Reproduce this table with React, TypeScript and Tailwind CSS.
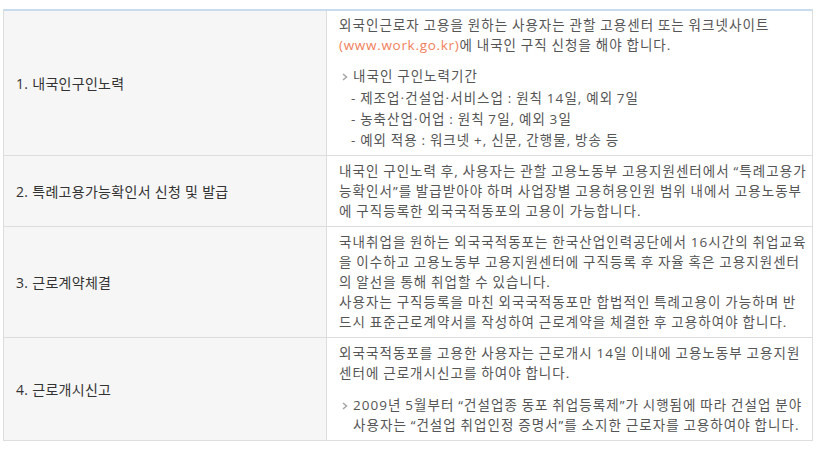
const Bullet = () => (
    <svg width="6" height="8" viewBox="0 0 6 8" className="absolute left-[3px] top-[7px]">
        <path d="M1 1 L4.5 4 L1 7" fill="none" stroke="#a8a8a8" strokeWidth="1.6" />
    </svg>
)

const Line = ({ children }: { children: React.ReactNode }) => (
    <span className="block whitespace-nowrap">{children}</span>
)

interface RowProps {
    label: string;
    last?: boolean;
    cellClass: string;
    children: React.ReactNode;
}

const Row = ({ label, last, cellClass, children }: RowProps) => (
    <div className={`grid grid-cols-[323px_1fr] ${last ? '' : 'border-b border-[#dddddd]'}`}>
        <div className="flex items-center bg-[#f6f6f6] border-r border-[#dddddd] pl-3 text-[14px] tracking-[0.3px] text-[#333333]">
            {label}
        </div>
        <div className={`pl-3 text-[13.5px] leading-[20px] tracking-[1.05px] [word-spacing:-0.8px] text-[#555555] ${cellClass}`}>
            {children}
        </div>
    </div>
)

export default function App() {
    return (
        <div className="min-h-[454px] bg-white pt-[9px] pl-[3px]" style={{ fontFamily: '"Open Sans", "Noto Sans CJK KR", sans-serif' }}>
            <div className="w-[810px] border-t-2 border-t-[#c9dcee] border-x border-b border-[#dddddd]">
                <Row label="1. 내국인구인노력" cellClass="pt-[4px] pb-[4px]">
                    <Line>외국인근로자 고용을 원하는 사용자는 관할 고용센터 또는 워크넷사이트</Line>
                    <Line><span className="text-[#f2805a] tracking-[0.7px]">(www.work.go.kr)</span>에 내국인 구직 신청을 해야 합니다.</Line>
                    <div className="relative mt-[11px] pl-[14px]">
                        <Bullet />
                        <Line>내국인 구인노력기간</Line>
                    </div>
                    <div className="mt-[2px] pl-3 leading-[21px]">
                        <Line>- 제조업·건설업·서비스업 : 원칙 14일, 예외 7일</Line>
                        <Line>- 농축산업·어업 : 원칙 7일, 예외 3일</Line>
                        <Line>- 예외 적용 : 워크넷 +, 신문, 간행물, 방송 등</Line>
                    </div>
                </Row>
                <Row label="2. 특례고용가능확인서 신청 및 발급" cellClass="py-[5px]">
                    <Line>내국인 구인노력 후, 사용자는 관할 고용노동부 고용지원센터에서 “특례고용가</Line>
                    <Line>능확인서”를 발급받아야 하며 사업장별 고용허용인원 범위 내에서 고용노동부</Line>
                    <Line>에 구직등록한 외국국적동포의 고용이 가능합니다.</Line>
                </Row>
                <Row label="3. 근로계약체결" cellClass="py-[5px]">
                    <Line>국내취업을 원하는 외국국적동포는 한국산업인력공단에서 16시간의 취업교육</Line>
                    <Line>을 이수하고 고용노동부 고용지원센터에 구직등록 후 자율 혹은 고용지원센터</Line>
                    <Line>의 알선을 통해 취업할 수 있습니다.</Line>
                    <Line>사용자는 구직등록을 마친 외국국적동포만 합법적인 특례고용이 가능하며 반</Line>
                    <Line>드시 표준근로계약서를 작성하여 근로계약을 체결한 후 고용하여야 합니다.</Line>
                </Row>
                <Row label="4. 근로개시신고" cellClass="py-[5px]" last>
                    <Line>외국국적동포를 고용한 사용자는 근로개시 14일 이내에 고용노동부 고용지원</Line>
                    <Line>센터에 근로개시신고를 하여야 합니다.</Line>
                    <div className="relative mt-3 pl-[14px]">
                        <Bullet />
                        <Line>2009년 5월부터 “건설업종 동포 취업등록제”가 시행됨에 따라 건설업 분야</Line>
                        <Line>사용자는 “건설업 취업인정 증명서”를 소지한 근로자를 고용하여야 합니다.</Line>
                    </div>
                </Row>
            </div>
        </div>
    )
}
